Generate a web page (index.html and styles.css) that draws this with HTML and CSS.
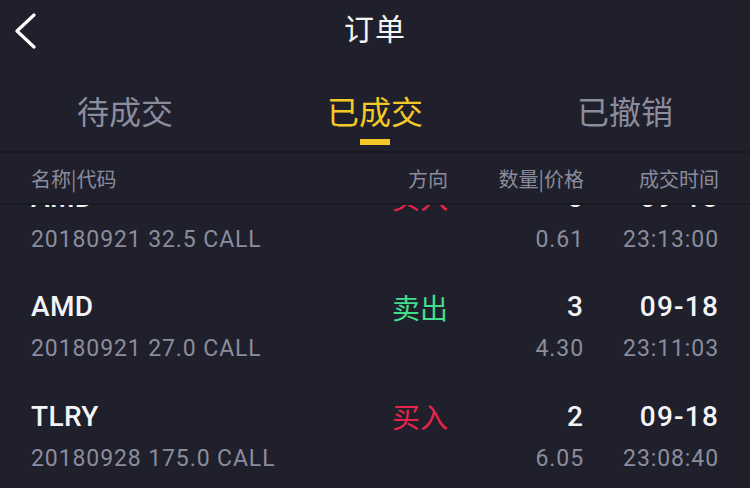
FILE: index.html
```html
<!DOCTYPE html>
<html lang="zh-CN">
<head>
    <meta charset="UTF-8">
    <meta name="viewport" content="width=device-width, initial-scale=1.0">
    <title>订单</title>
    <link rel="stylesheet" href="styles.css">
</head>
<body>
    <div class="page">
        <div class="nav-bar">
            <svg class="back-icon" width="24" height="36" viewBox="0 0 24 36">
                <polyline points="20,2 3,18 20,34" fill="none" stroke="#ffffff" stroke-width="3.2" stroke-linecap="round" stroke-linejoin="round"/>
            </svg>
            <h1 class="nav-title">订单</h1>
        </div>

        <div class="tabs">
            <div class="tab">待成交</div>
            <div class="tab active">已成交<span class="tab-line"></span></div>
            <div class="tab">已撤销</div>
        </div>

        <div class="list-head">
            <span>名称|代码</span>
            <span class="right">方向</span>
            <span class="right">数量|价格</span>
            <span class="right">成交时间</span>
        </div>

        <div class="list">
            <div class="list-inner">
                <div class="order">
                    <span class="symbol">AMD</span>
                    <span class="side buy">买入</span>
                    <span class="num">5</span>
                    <span class="num">09-18</span>
                    <span class="sub">20180921 32.5 CALL</span>
                    <span></span>
                    <span class="sub right">0.61</span>
                    <span class="sub right">23:13:00</span>
                </div>
                <div class="order">
                    <span class="symbol">AMD</span>
                    <span class="side sell">卖出</span>
                    <span class="num">3</span>
                    <span class="num">09-18</span>
                    <span class="sub">20180921 27.0 CALL</span>
                    <span></span>
                    <span class="sub right">4.30</span>
                    <span class="sub right">23:11:03</span>
                </div>
                <div class="order">
                    <span class="symbol">TLRY</span>
                    <span class="side buy">买入</span>
                    <span class="num">2</span>
                    <span class="num">09-18</span>
                    <span class="sub">20180928 175.0 CALL</span>
                    <span></span>
                    <span class="sub right">6.05</span>
                    <span class="sub right">23:08:40</span>
                </div>
            </div>
        </div>
    </div>
</body>
</html>
```

FILE: styles.css
```css
:root {
    --bg: #1f202b;
    --line: #181921;
    --text: #f4f4f7;
    --muted: #8b8c9e;
    --yellow: #f5c829;
    --green: #43de8c;
    --red: #e8244e;
}

* {
    box-sizing: border-box;
}

body {
    margin: 0;
    background: var(--bg);
    color: var(--text);
    font-family: Roboto, "Noto Sans CJK SC", sans-serif;
    overflow: hidden;
}

.page {
    width: 750px;
    height: 488px;
    display: flex;
    flex-direction: column;
    overflow: hidden;
}

.nav-bar {
    height: 60px;
    padding-bottom: 6px;
    display: flex;
    align-items: center;
    justify-content: center;
    position: relative;
}

.back-icon {
    position: absolute;
    left: 14px;
    top: 13px;
}

.nav-title {
    margin: 0;
    font-family: "Noto Sans CJK SC", sans-serif;
    font-size: 30px;
    line-height: 40px;
    font-weight: 400;
    letter-spacing: 1px;
}

.tabs {
    display: grid;
    grid-template-columns: repeat(3, 1fr);
    height: 93px;
    border-bottom: 2px solid var(--line);
}

.tab {
    display: flex;
    flex-direction: column;
    align-items: center;
    padding-top: 30px;
    font-family: "Noto Sans CJK SC", sans-serif;
    font-size: 32px;
    line-height: 40px;
    color: var(--muted);
}

.tab.active {
    color: var(--yellow);
}

.tab-line {
    width: 30px;
    height: 6px;
    margin-top: 9px;
    background: var(--yellow);
}

.list-head,
.order {
    display: grid;
    grid-template-columns: 1fr 100px 136px 135px;
    padding: 0 31px;
}

.list-head {
    height: 52px;
    align-items: center;
    border-bottom: 2px solid var(--line);
    font-family: "Noto Sans CJK SC", sans-serif;
    font-size: 20px;
    color: var(--muted);
}

.right {
    text-align: right;
}

.list {
    flex: 1;
    overflow: hidden;
}

/* list is scrolled a little: first row sits under the header */
.list-inner {
    margin-top: -50px;
}

.order {
    height: 109.5px;
    padding-top: 22px;
    grid-template-rows: 40px 44px;
    align-items: center;
}

.symbol,
.num {
    font-size: 28px;
    font-weight: 500;
    color: var(--text);
    letter-spacing: 0.4px;
}

.num {
    text-align: right;
    letter-spacing: 1.2px;
}

.side {
    font-family: "Noto Sans CJK SC", sans-serif;
    font-size: 28px;
    text-align: right;
}

.buy {
    color: var(--red);
}

.sell {
    color: var(--green);
}

.sub {
    font-size: 23px;
    color: var(--muted);
    letter-spacing: 0.9px;
    white-space: nowrap;
}
```
